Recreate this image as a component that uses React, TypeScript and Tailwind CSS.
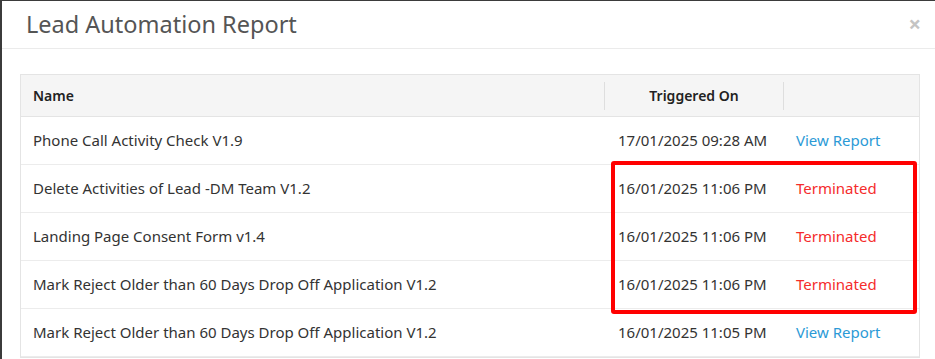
import React from 'react';

type Row = { name: string; triggeredOn: string; status: 'report' | 'terminated' };

const rows: Row[] = [
  { name: 'Phone Call Activity Check V1.9', triggeredOn: '17/01/2025 09:28 AM', status: 'report' },
  { name: 'Delete Activities of Lead -DM Team V1.2', triggeredOn: '16/01/2025 11:06 PM', status: 'terminated' },
  { name: 'Landing Page Consent Form v1.4', triggeredOn: '16/01/2025 11:06 PM', status: 'terminated' },
  { name: 'Mark Reject Older than 60 Days Drop Off Application V1.2', triggeredOn: '16/01/2025 11:06 PM', status: 'terminated' },
  { name: 'Mark Reject Older than 60 Days Drop Off Application V1.2', triggeredOn: '16/01/2025 11:05 PM', status: 'report' },
];

export default function App() {
  return (
    <div
      className="w-[935px] h-[359px] overflow-hidden bg-[#3b3b3b] pl-[2px] pt-[1px] text-[#333]"
      style={{ fontFamily: '"Noto Sans", "Open Sans", sans-serif' }}
    >
      <div className="relative h-full bg-white">
        {/* Header */}
        <div className="flex items-center justify-between h-[48px] border-b border-[#ebebeb] pl-[24px] pr-[14px]">
          <h1 className="text-[23.5px] text-[#555] leading-none">Lead Automation Report</h1>
          <button className="text-[#c4c4c4] text-[22px] leading-none font-bold -mt-[3px]">×</button>
        </div>

        {/* Table */}
        <div className="pt-[25px] pl-[18px] pr-[15px]">
          <div className="border border-[#e4e4e4]">
            <div className="flex items-center h-[42px] bg-[#f5f5f5] border-b border-[#e4e4e4] text-[14px] font-semibold text-[#222]">
              <div className="w-[583px] pl-[12px]">Name</div>
              <div className="w-px h-[28px] bg-[#dedede]" />
              <div className="w-[178px] text-center">Triggered On</div>
              <div className="w-px h-[28px] bg-[#dedede]" />
              <div className="flex-1" />
            </div>
            {rows.map((r, i) => (
              <div key={i} className="flex items-center h-[48px] border-b border-[#ececec] text-[15px]">
                <div className="w-[584px] pl-[12px]">{r.name}</div>
                <div className="w-[179px] pl-[13px]">{r.triggeredOn}</div>
                <div className="flex-1 pl-[12px]">
                  {r.status === 'report' ? (
                    <span className="text-[#2b9ad6]">View Report</span>
                  ) : (
                    <span className="text-[#f52c2c]">Terminated</span>
                  )}
                </div>
              </div>
            ))}
          </div>
        </div>

        {/* highlight annotation */}
        <div className="absolute left-[609px] top-[160px] w-[306px] h-[153px] border-[4px] border-[#ff0000] rounded-[3px]" />
      </div>
    </div>
  );
}
